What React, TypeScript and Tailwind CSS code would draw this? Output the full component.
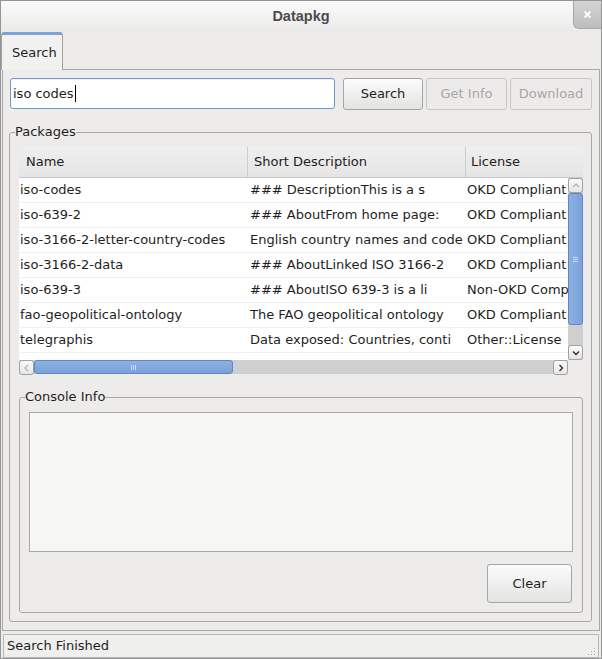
import clsx from "clsx"

const rows = [
  ["iso-codes", "### DescriptionThis is a s", "OKD Compliant"],
  ["iso-639-2", "### AboutFrom home page:", "OKD Compliant"],
  ["iso-3166-2-letter-country-codes", "English country names and code", "OKD Compliant"],
  ["iso-3166-2-data", "### AboutLinked ISO 3166-2", "OKD Compliant"],
  ["iso-639-3", "### AboutISO 639-3 is a li", "Non-OKD Comp"],
  ["fao-geopolitical-ontology", "The FAO geopolitical ontology", "OKD Compliant"],
  ["telegraphis", "Data exposed: Countries, conti", "Other::License"],
]

function Btn({ label, disabled, className }: { label: string; disabled?: boolean; className?: string }) {
  return (
    <button
      className={clsx(
        "flex items-center justify-center rounded-[3px] border",
        disabled
          ? "border-[#c6c6c6] bg-[#ecebea] text-[#a6a6a6]"
          : "border-[#a4a4a4] bg-linear-to-b from-[#fcfcfc] to-[#e3e3e2] text-[#1e1e1e]",
        className
      )}
    >
      {label}
    </button>
  )
}

function Arrow({ dir, dim }: { dir: "up" | "down" | "left" | "right"; dim?: boolean }) {
  const d = {
    up: "M1 5L4 2L7 5",
    down: "M1 2.5L4 5.5L7 2.5",
    left: "M5 1L2 4L5 7",
    right: "M2.5 1L5.5 4L2.5 7",
  }[dir]
  return (
    <svg width="8" height="8" viewBox="0 0 8 8">
      <path d={d} fill="none" stroke={dim ? "#b4b4b4" : "#2a2a2a"} strokeWidth="1.3" />
    </svg>
  )
}

function ArrowBox({ dir, dim }: { dir: "up" | "down" | "left" | "right"; dim?: boolean }) {
  return (
    <div className="flex h-[15px] w-[15px] shrink-0 items-center justify-center rounded-[3px] border border-[#a2a2a2] bg-linear-to-b from-[#fafafa] to-[#e6e6e6]">
      <Arrow dir={dir} dim={dim} />
    </div>
  )
}

function Fieldset({ title, className, children }: { title: string; className?: string; children: React.ReactNode }) {
  return (
    <fieldset className={clsx("rounded-[3px] border border-[#a8a8a8]", className)}>
      <legend className="ml-[5px] leading-[16px]">{title}</legend>
      {children}
    </fieldset>
  )
}

export default function App() {
  return (
    <div className="flex h-[659px] w-[602px] flex-col overflow-hidden border border-[#959595] bg-[#edeceb] font-['DejaVu_Sans',sans-serif] text-[13px] text-[#1e1e1e]">
      {/* title bar */}
      <div className="grid h-[31px] shrink-0 grid-cols-[28px_1fr_28px] bg-linear-to-b from-[#fafafa] to-[#ecebea]">
        <div />
        <div className="flex items-center justify-center pt-[1px] font-['Liberation_Sans',sans-serif] text-[14.5px] font-bold text-[#4b4b4b]">
          Datapkg
        </div>
        <div className="flex h-[28px] items-center justify-center rounded-bl-[6px] border-b border-l border-[#a8a8a8] bg-linear-to-b from-[#d4d4d4] to-[#bdbdbd]">
          <svg width="9" height="9" viewBox="0 0 9 9">
            <path d="M1.5 1.5L7.5 7.5M7.5 1.5L1.5 7.5" stroke="#fbfbfb" strokeWidth="2" />
          </svg>
        </div>
      </div>

      {/* tabs */}
      <div className="flex h-[37px] shrink-0 items-start">
        <div className="relative z-10 flex h-[38px] w-[62px] items-center rounded-t-[3px] border border-b-0 border-t-[3px] border-[#a2a2a2] border-t-[#7fa3d7] bg-[#f1f1f0] pl-[10px]">
          Search
        </div>
      </div>

      {/* tab pane */}
      <div className="mx-[1px] flex h-[562px] shrink-0 flex-col border border-[#a9a9a9] bg-[#edeceb]">
        <div className="mt-[8px] ml-[7px] flex h-[32px]">
          <div className="flex h-[31px] w-[325px] items-center rounded-[3px] border border-[#6e97d0] bg-white pl-[2px] shadow-[inset_0_1px_1px_rgba(0,0,0,0.06)]">
            <span>iso codes</span>
            <span className="ml-[1px] h-[17px] w-px bg-black" />
          </div>
          <Btn label="Search" className="ml-[8px] h-[32px] w-[80px]" />
          <Btn label="Get Info" disabled className="ml-[3px] h-[32px] w-[81px]" />
          <Btn label="Download" disabled className="ml-[3px] h-[32px] w-[82px]" />
        </div>

        <Fieldset title="Packages" className="mt-[14px] ml-[6px] mr-[7px]">
          <div className="pt-[7px] pl-[9px] pr-[8px] pb-[8px]">
            {/* table */}
            <div className="flex h-[227px] w-[564px] flex-col bg-white">
              <div className="flex h-[31px] shrink-0 border-b border-[#c9c9c9] bg-linear-to-b from-[#efefef] to-[#e5e5e5]">
                <div className="flex w-[229px] items-center border-r border-[#cdcdcd] pl-[7px]">Name</div>
                <div className="flex w-[218px] items-center border-r border-[#cdcdcd] pl-[6px]">Short Description</div>
                <div className="flex flex-1 items-center pl-[5px]">License</div>
              </div>
              <div className="flex h-[182px]">
                <div className="w-[549px] overflow-hidden">
                  {rows.map(r => (
                    <div key={r[0]} className="flex h-[25px] items-center whitespace-nowrap border-b border-[#f1f1f1]">
                      <div className="w-[229px] shrink-0 overflow-hidden pl-[1px]">{r[0]}</div>
                      <div className="w-[218px] shrink-0 overflow-hidden pl-[2px]">{r[1]}</div>
                      <div className="shrink-0 pl-[1px]">{r[2]}</div>
                    </div>
                  ))}
                </div>
                {/* vertical scrollbar */}
                <div className="flex w-[15px] flex-col bg-[#cfcfcf]">
                  <ArrowBox dir="up" dim />
                  <div className="flex h-[132px] items-center justify-center rounded-[3px] border border-[#5d87c5] bg-linear-to-r from-[#8db0e2] to-[#7aa2da]">
                    <svg width="7" height="7" viewBox="0 0 7 7">
                      <path d="M1 1.5H6M1 3.5H6M1 5.5H6" stroke="#c9dbf3" strokeWidth="1" />
                    </svg>
                  </div>
                  <div className="flex-1" />
                  <ArrowBox dir="down" />
                </div>
              </div>
              {/* horizontal scrollbar */}
              <div className="flex h-[14px]">
                <div className="flex w-[549px] bg-[#cfcfcf]">
                  <ArrowBox dir="left" dim />
                  <div className="flex w-[199px] items-center justify-center rounded-[3px] border border-[#5d87c5] bg-linear-to-b from-[#8db0e2] to-[#7aa2da]">
                    <svg width="7" height="7" viewBox="0 0 7 7">
                      <path d="M1.5 1V6M3.5 1V6M5.5 1V6" stroke="#c9dbf3" strokeWidth="1" />
                    </svg>
                  </div>
                  <div className="flex-1" />
                  <ArrowBox dir="right" />
                </div>
                <div className="flex-1 bg-[#edeceb]" />
              </div>
            </div>

            <Fieldset title="Console Info" className="mt-[15px] w-[564px]">
              <div className="flex flex-col pt-[7px] pl-[9px] pr-[9px] pb-[9px]">
                <div className="h-[140px] border border-[#a9a9a9] bg-[#f6f6f5]" />
                <Btn label="Clear" className="mt-[12px] mr-[1px] ml-auto h-[39px] w-[85px]" />
              </div>
            </Fieldset>
          </div>
        </Fieldset>
      </div>

      {/* status bar */}
      <div className="h-[27px] shrink-0 px-[2px] pt-[3px]">
        <div className="flex h-[24px] items-center border border-[#b7b7b7] bg-[#efefee] pl-[3px]">
          <span className="flex-1">Search Finished</span>
          <svg width="11" height="11" viewBox="0 0 11 11" className="mr-[1px] self-end">
            <g fill="#a8a8a8">
              <rect x="8" y="2" width="1" height="1" />
              <rect x="5" y="5" width="1" height="1" />
              <rect x="8" y="5" width="1" height="1" />
              <rect x="2" y="8" width="1" height="1" />
              <rect x="5" y="8" width="1" height="1" />
              <rect x="8" y="8" width="1" height="1" />
            </g>
          </svg>
        </div>
      </div>
    </div>
  )
}
